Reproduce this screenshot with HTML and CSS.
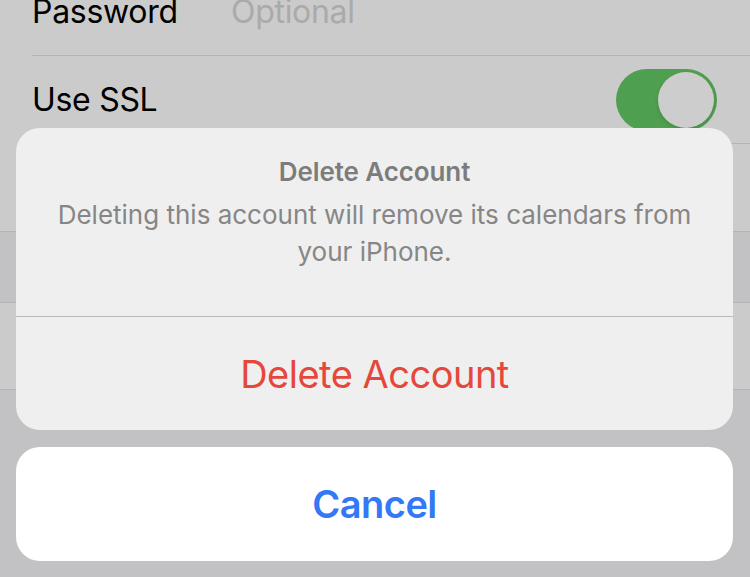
FILE: index.html
```html
<!DOCTYPE html>
<html lang="en">
<head>
<meta charset="utf-8">
<title>Delete Account</title>
<link rel="stylesheet" href="styles.css">
</head>
<body>
<div class="screen">
  <div class="list">
    <div class="group group-first">
      <div class="row">
        <div class="row-inner sep">
          <span class="label">Password</span>
          <span class="placeholder">Optional</span>
        </div>
      </div>
      <div class="row">
        <div class="row-inner sep">
          <span class="label">Use SSL</span>
          <span class="toggle"><span class="knob"></span></span>
        </div>
      </div>
      <div class="row row-last">
        <div class="row-inner"></div>
      </div>
    </div>
    <div class="gap"></div>
    <div class="group">
      <div class="row row-single">
        <div class="row-inner"></div>
      </div>
    </div>
  </div>

  <div class="sheet-wrap">
    <div class="sheet">
      <div class="sheet-header">
        <div class="sheet-title">Delete Account</div>
        <div class="sheet-message">Deleting this account will remove its calendars from<br>your iPhone.</div>
      </div>
      <div class="sheet-button destructive">Delete Account</div>
    </div>
    <div class="sheet cancel-sheet">
      <div class="sheet-button cancel">Cancel</div>
    </div>
  </div>
</div>
</body>
</html>
```
FILE: styles.css
```css
html, body {
  margin: 0;
  padding: 0;
}

body {
  font-family: Inter, "Noto Sans", "Liberation Sans", sans-serif;
  background: #c2c2c4;
}

.screen {
  position: relative;
  width: 750px;
  height: 577px;
  overflow: hidden;
  background: #c2c2c4;
}

.list {
  margin-top: -32px;
  display: flex;
  flex-direction: column;
}

.group {
  background: #cbcbcb;
  border-top: 1px solid #b4b4b6;
  border-bottom: 1px solid #b4b4b6;
}

.group-first {
  border-top: none;
}

.row {
  padding-left: 32px;
}

.row-inner {
  height: 87px;
  display: flex;
  align-items: center;
  padding-right: 33px;
}

.row-inner.sep {
  border-bottom: 1px solid #b4b4b6;
}

.row-last .row-inner {
  height: 87px;
}

.row-single .row-inner {
  height: 86px;
}

.gap {
  height: 70px;
}

.label {
  font-size: 32px;
  color: #000;
  letter-spacing: -0.3px;
  width: 199px;
}

.placeholder {
  font-size: 32px;
  color: #aaaaaa;
  letter-spacing: -0.3px;
}

.toggle {
  margin-left: auto;
  width: 101px;
  height: 62px;
  border-radius: 31px;
  background: #4e9f50;
  display: flex;
  align-items: center;
  justify-content: flex-end;
  padding-right: 3px;
  box-sizing: border-box;
}

.knob {
  width: 56px;
  height: 56px;
  border-radius: 50%;
  background: #cdcdcd;
  box-shadow: 0 2px 4px rgba(0, 0, 0, 0.12);
}

.sheet-wrap {
  position: absolute;
  left: 16px;
  right: 17px;
  bottom: 16px;
  display: flex;
  flex-direction: column;
  gap: 17px;
}

.sheet {
  background: #efefef;
  border-radius: 24px;
  overflow: hidden;
}

.sheet-header {
  height: 189px;
  box-sizing: border-box;
  padding: 28px 20px 0;
  border-bottom: 1px solid #b9b9bb;
  text-align: center;
}

.sheet-title {
  font-size: 26px;
  font-weight: 600;
  line-height: 32px;
  color: #7c7c7c;
  letter-spacing: -0.1px;
}

.sheet-message {
  margin-top: 8px;
  font-size: 26px;
  line-height: 37px;
  color: #868686;
  letter-spacing: 0px;
}

.sheet-button {
  height: 113px;
  display: flex;
  align-items: center;
  justify-content: center;
  font-size: 38px;
  letter-spacing: -0.5px;
}

.destructive {
  color: #e5483b;
}

.cancel-sheet {
  background: #ffffff;
}

.cancel {
  height: 114px;
  color: #3478f6;
  font-weight: 600;
  font-size: 38px;
}
```
